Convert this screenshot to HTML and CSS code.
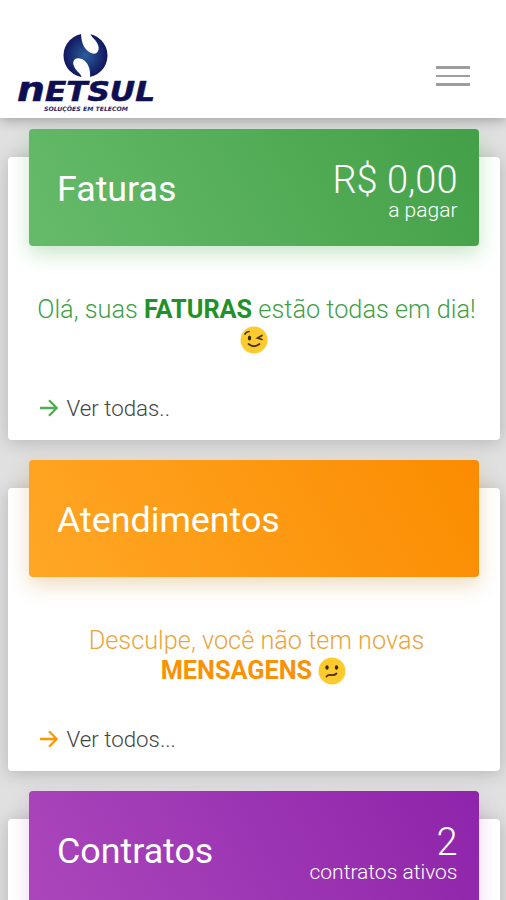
FILE: index.html
```
<!DOCTYPE html>
<html lang="pt-BR">

<head>
    <meta charset="utf-8">
    <title>Netsul</title>
    <link rel="stylesheet" href="styles.css">
</head>

<body>
    <header class="topbar">
        <svg class="logo" width="144" height="84" viewBox="0 0 144 84">
            <defs>
                <radialGradient id="globe">
                    <stop offset="0" stop-color="#2a5c9c"></stop>
                    <stop offset="1" stop-color="#11175e"></stop>
                </radialGradient>
            </defs>
            <circle cx="71.500" cy="25.500" r="22" fill="url(#globe)"></circle>
            <path d="M67 2 C67 14 71 20 77 23 C83 26 86 20 84 15 C82 9 77 8 76 2 Z" fill="#fff"></path>
            <path d="M76 49 C77 39 74 32 68 29 C60 26 58 32 60 36 C62 42 67 42 68 49 Z" fill="#fff"></path>
            <text class="logo-name" x="3" y="71" textLength="138" lengthAdjust="spacingAndGlyphs"><tspan class="logo-n">n</tspan>ETSUL</text>
            <text class="logo-sub" x="30" y="81" textLength="84" lengthAdjust="spacingAndGlyphs">SOLUÇÕES EM TELECOM</text>
        </svg>
        <div class="menu">
            <span></span>
            <span></span>
            <span></span>
        </div>
    </header>
    <div class="cards">
        <div class="card green">
            <div class="card-header">
                <h2>Faturas</h2>
                <div class="info">
                    <div class="number">R$ 0,00</div>
                    <div class="smalltext">a pagar</div>
                </div>
            </div>
            <p class="message">Olá, suas <b>FATURAS</b> estão todas em dia!
                <svg class="emoji" viewBox="0 0 28 28">
                    <circle cx="14" cy="14" r="13.500" fill="#fdcb2e"></circle>
                    <ellipse cx="9.500" cy="12" rx="1.700" ry="2.500" fill="#3b2a17"></ellipse>
                    <path d="M5 8 Q6.500 5.500 9 5.500 M22 9.500 L17.500 12 L22 13.500 M8.500 18 Q14 22.500 19.500 18" fill="none" stroke="#4a3214" stroke-width="1.700" stroke-linecap="round"></path>
                </svg>
            </p>
            <div class="link">
                <svg class="arrow" viewBox="0 0 18 18"><path d="M0 9 H16.500 M9 1.300 L16.700 9 L9 16.700"></path></svg>
                <span>Ver todas..</span>
            </div>
        </div>
        <div class="card orange">
            <div class="card-header">
                <h2>Atendimentos</h2>
            </div>
            <p class="message">Desculpe, você não tem novas <b>MENSAGENS</b>
                <svg class="emoji" viewBox="0 0 28 28">
                    <circle cx="14" cy="14" r="13.500" fill="#fdcb2e"></circle>
                    <ellipse cx="9" cy="10.500" rx="1.700" ry="2.300" fill="#3b2a17"></ellipse>
                    <ellipse cx="18.500" cy="10.500" rx="1.700" ry="2.300" fill="#3b2a17"></ellipse>
                    <path d="M8.500 19.500 Q10 17.500 13 18 Q16.500 18.500 18.500 16.500" fill="none" stroke="#4a3214" stroke-width="1.800" stroke-linecap="round"></path>
                </svg>
            </p>
            <div class="link">
                <svg class="arrow" viewBox="0 0 18 18"><path d="M0 9 H16.500 M9 1.300 L16.700 9 L9 16.700"></path></svg>
                <span>Ver todos...</span>
            </div>
        </div>
        <div class="card purple">
            <div class="card-header">
                <h2>Contratos</h2>
                <div class="info">
                    <div class="number">2</div>
                    <div class="smalltext">contratos ativos</div>
                </div>
            </div>
        </div>
    </div>
</body>

</html>
```
FILE: styles.css
```
* {
    box-sizing: border-box;
}

body {
    margin: 0;
    height: 900px;
    overflow: hidden;
    background: #e0e0e0;
    font-family: Roboto, sans-serif;
    font-weight: 300;
}

.topbar {
    position: relative;
    display: flex;
    justify-content: space-between;
    height: 118px;
    padding: 30px 36px 0 14px;
    background: #fff;
    box-shadow: 0 2px 12px rgba(0, 0, 0, 0.3);
}

.logo-name {
    font: italic bold 27px "DejaVu Sans", sans-serif;
    fill: #0e0f52;
    stroke: #0e0f52;
    stroke-width: 0.6px;
}

.logo-n {
    font-size: 34px;
}

.logo-sub {
    font: italic bold 6px "DejaVu Sans", sans-serif;
    fill: #2a2468;
}

.menu {
    display: flex;
    flex-direction: column;
    gap: 6px;
    width: 34px;
    padding-top: 36px;
}

.menu span {
    height: 2.500px;
    background: #9e9e9e;
}

.cards {
    padding: 39px 6.500px 0 7.500px;
}

.card {
    height: 283px;
    margin-bottom: 48px;
    padding: 0 21px;
    border-radius: 4px;
    background: #fff;
    box-shadow: 0 2px 18px rgba(0, 0, 0, 0.2);
}

.card-header {
    position: relative;
    top: -28.500px;
    display: flex;
    justify-content: space-between;
    align-items: center;
    height: 117px;
    padding: 3px 21px 0 28.500px;
    border-radius: 4px;
    color: #fff;
}

h2 {
    margin: 0;
    font-size: 35.8px;
    font-weight: 400;
}

.info {
    padding-top: 7px;
    text-align: right;
}

.number {
    font-size: 38px;
    line-height: 36px;
}

.smalltext {
    font-size: 21px;
    line-height: 25px;
}

/* first line sits a little to the right of the centre */
.message {
    height: 60px;
    margin: 21px 0 0;
    font-size: 25.3px;
    line-height: 29.5px;
    text-align: center;
    text-indent: 6px;
}

.message b {
    font-weight: 700;
}

.emoji {
    width: 28px;
    height: 28px;
    vertical-align: -6px;
}

.link {
    display: flex;
    align-items: center;
    gap: 9px;
    margin-top: 40px;
    padding-left: 11px;
    color: #444;
    font-size: 22.3px;
    line-height: 26px;
}

.arrow {
    width: 18px;
    height: 18px;
    fill: none;
    stroke-width: 2.300px;
}

.green .card-header {
    background: linear-gradient(60deg, #66bb6a, #43a047);
    box-shadow: 0 8px 20px rgba(76, 175, 80, 0.3);
}

.green .message {
    color: #3f9f46;
}

.green .message b {
    color: #21912a;
}

.green .arrow {
    stroke: #4caf50;
}

.orange .card-header {
    background: linear-gradient(60deg, #ffa726, #fb8c00);
    box-shadow: 0 8px 20px rgba(200, 140, 40, 0.3);
}

.orange .message {
    padding: 0 30px;
    color: #eba53a;
}

.orange .message b {
    color: #fb9104;
}

.orange .arrow {
    stroke: #ff9800;
}

.purple .card-header {
    background: linear-gradient(60deg, #ab47bc, #8e24aa);
    box-shadow: 0 8px 20px rgba(156, 39, 176, 0.2);
}
```
